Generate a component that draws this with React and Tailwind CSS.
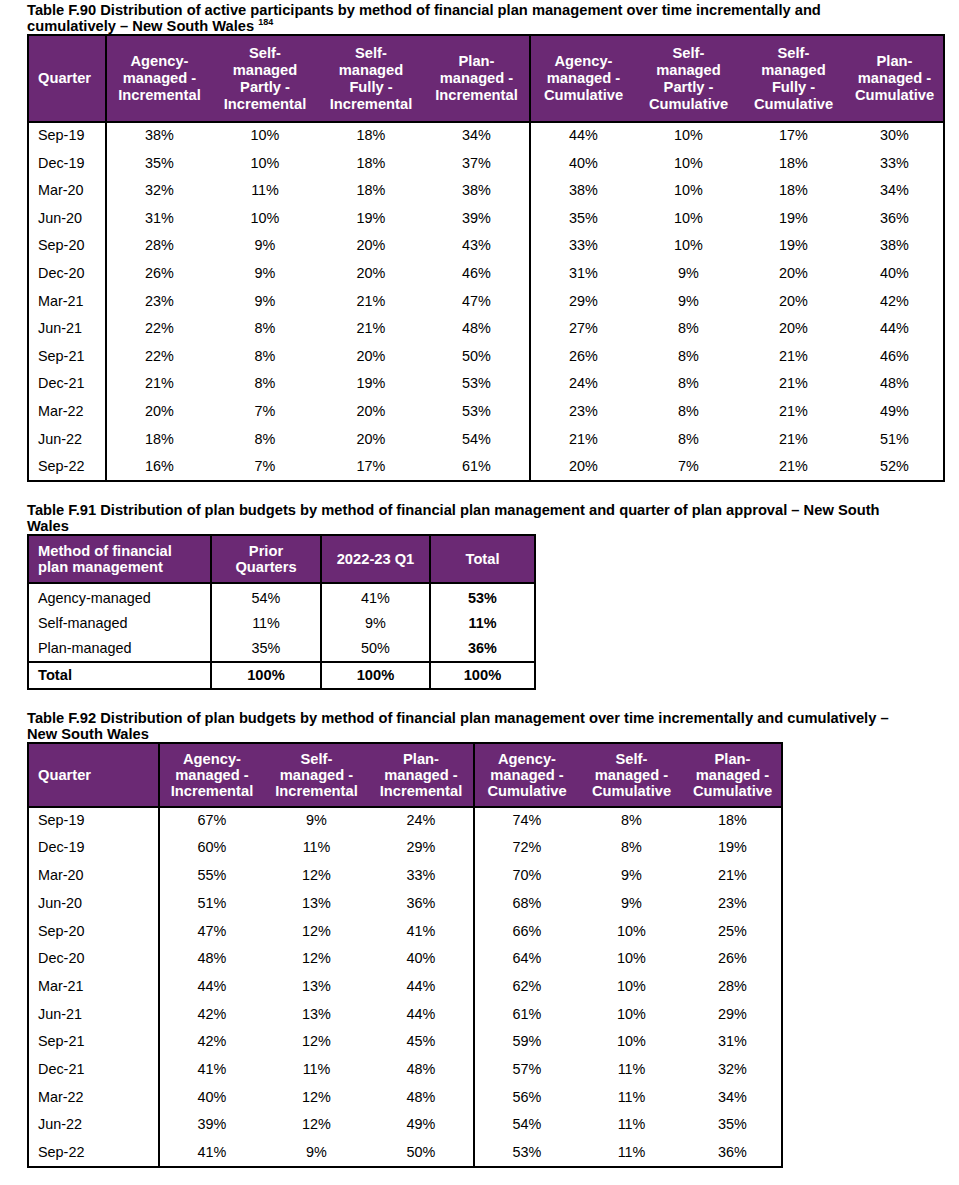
import React from 'react';

const f90Rows = [
  ['Sep-19', '38%', '10%', '18%', '34%', '44%', '10%', '17%', '30%'],
  ['Dec-19', '35%', '10%', '18%', '37%', '40%', '10%', '18%', '33%'],
  ['Mar-20', '32%', '11%', '18%', '38%', '38%', '10%', '18%', '34%'],
  ['Jun-20', '31%', '10%', '19%', '39%', '35%', '10%', '19%', '36%'],
  ['Sep-20', '28%', '9%', '20%', '43%', '33%', '10%', '19%', '38%'],
  ['Dec-20', '26%', '9%', '20%', '46%', '31%', '9%', '20%', '40%'],
  ['Mar-21', '23%', '9%', '21%', '47%', '29%', '9%', '20%', '42%'],
  ['Jun-21', '22%', '8%', '21%', '48%', '27%', '8%', '20%', '44%'],
  ['Sep-21', '22%', '8%', '20%', '50%', '26%', '8%', '21%', '46%'],
  ['Dec-21', '21%', '8%', '19%', '53%', '24%', '8%', '21%', '48%'],
  ['Mar-22', '20%', '7%', '20%', '53%', '23%', '8%', '21%', '49%'],
  ['Jun-22', '18%', '8%', '20%', '54%', '21%', '8%', '21%', '51%'],
  ['Sep-22', '16%', '7%', '17%', '61%', '20%', '7%', '21%', '52%'],
];

const f92Rows = [
  ['Sep-19', '67%', '9%', '24%', '74%', '8%', '18%'],
  ['Dec-19', '60%', '11%', '29%', '72%', '8%', '19%'],
  ['Mar-20', '55%', '12%', '33%', '70%', '9%', '21%'],
  ['Jun-20', '51%', '13%', '36%', '68%', '9%', '23%'],
  ['Sep-20', '47%', '12%', '41%', '66%', '10%', '25%'],
  ['Dec-20', '48%', '12%', '40%', '64%', '10%', '26%'],
  ['Mar-21', '44%', '13%', '44%', '62%', '10%', '28%'],
  ['Jun-21', '42%', '13%', '44%', '61%', '10%', '29%'],
  ['Sep-21', '42%', '12%', '45%', '59%', '10%', '31%'],
  ['Dec-21', '41%', '11%', '48%', '57%', '11%', '32%'],
  ['Mar-22', '40%', '12%', '48%', '56%', '11%', '34%'],
  ['Jun-22', '39%', '12%', '49%', '54%', '11%', '35%'],
  ['Sep-22', '41%', '9%', '50%', '53%', '11%', '36%'],
];

const f90Head = [
  ['Quarter'],
  ['Agency-', 'managed -', 'Incremental'],
  ['Self-', 'managed', 'Partly -', 'Incremental'],
  ['Self-', 'managed', 'Fully -', 'Incremental'],
  ['Plan-', 'managed -', 'Incremental'],
  ['Agency-', 'managed -', 'Cumulative'],
  ['Self-', 'managed', 'Partly -', 'Cumulative'],
  ['Self-', 'managed', 'Fully -', 'Cumulative'],
  ['Plan-', 'managed -', 'Cumulative'],
];

const f92Head = [
  ['Quarter'],
  ['Agency-', 'managed -', 'Incremental'],
  ['Self-', 'managed -', 'Incremental'],
  ['Plan-', 'managed -', 'Incremental'],
  ['Agency-', 'managed -', 'Cumulative'],
  ['Self-', 'managed -', 'Cumulative'],
  ['Plan-', 'managed -', 'Cumulative'],
];

const Title = ({ lines, note }) => (
  <div className="text-[14.7px] leading-[16px] font-bold text-black">
    {lines.map((l, i) => (
      <div key={i}>
        {l}
        {note && i === lines.length - 1 && <sup className="text-[9px] ml-[4px] top-[-6px]">{note}</sup>}
      </div>
    ))}
  </div>
);

const HeadCell = ({ lines, first, divider, leading }) => (
  <th
    className={`bg-[#6b2974] text-white font-bold text-[14.7px] ${leading} align-middle border-b-2 border-black ${
      first ? 'text-left pl-[9px]' : 'text-center'
    } ${divider ? 'border-r-2' : ''}`}
  >
    {lines.map((l, i) => (
      <div key={i}>{l}</div>
    ))}
  </th>
);

const QuarterTable = ({ widths, head, rows, dividers, headH, rowH, leading }) => (
  <table className="table-fixed border-collapse border-2 border-black" style={{ width: widths.reduce((a, b) => a + b, 0) }}>
    <colgroup>
      {widths.map((w, i) => (
        <col key={i} style={{ width: w }} />
      ))}
    </colgroup>
    <thead>
      <tr className={headH}>
        {head.map((h, i) => (
          <HeadCell key={i} lines={h} first={i === 0} divider={dividers.includes(i)} leading={leading} />
        ))}
      </tr>
    </thead>
    <tbody>
      {rows.map((r, ri) => (
        <tr key={ri} className={rowH}>
          {r.map((c, ci) => (
            <td
              key={ci}
              className={`text-[14.4px] p-0 align-middle border-black ${ci === 0 ? 'text-left pl-[9px]' : 'text-center'} ${
                dividers.includes(ci) ? 'border-r-2' : ''
              }`}
            >
              {c}
            </td>
          ))}
        </tr>
      ))}
    </tbody>
  </table>
);

const budgetRows = [
  ['Agency-managed', '54%', '41%', '53%'],
  ['Self-managed', '11%', '9%', '11%'],
  ['Plan-managed', '35%', '50%', '36%'],
];

const BudgetTable = () => {
  const widths = [183, 110, 109, 105];
  return (
    <table className="table-fixed border-collapse border-2 border-black" style={{ width: 507 }}>
      <colgroup>
        {widths.map((w, i) => (
          <col key={i} style={{ width: w }} />
        ))}
      </colgroup>
      <thead>
        <tr className="h-[48px]">
          <th className="bg-[#6b2974] text-white font-bold text-[14.7px] leading-[16px] text-left pl-[9px] border-b-2 border-r-2 border-black">
            <div>Method of financial</div>
            <div>plan management</div>
          </th>
          <th className="bg-[#6b2974] text-white font-bold text-[14.7px] leading-[16px] text-center border-b-2 border-r-2 border-black">
            <div>Prior</div>
            <div>Quarters</div>
          </th>
          <th className="bg-[#6b2974] text-white font-bold text-[14.7px] leading-[16px] text-center border-b-2 border-r-2 border-black">
            2022-23 Q1
          </th>
          <th className="bg-[#6b2974] text-white font-bold text-[14.7px] leading-[16px] text-center border-b-2 border-black">
            Total
          </th>
        </tr>
      </thead>
      <tbody>
        {budgetRows.map((r, ri) => (
          <tr key={ri} className={ri === 0 ? 'h-[28px]' : 'h-[25.5px]'}>
            <td className={`text-[14.4px] p-0 pl-[9px] border-r-2 border-black ${ri === 0 ? 'pt-[3px]' : ''}`}>{r[0]}</td>
            <td className={`text-[14.4px] p-0 text-center border-r-2 border-black ${ri === 0 ? 'pt-[3px]' : ''}`}>{r[1]}</td>
            <td className={`text-[14.4px] p-0 text-center border-r-2 border-black ${ri === 0 ? 'pt-[3px]' : ''}`}>{r[2]}</td>
            <td className={`text-[14.4px] p-0 text-center font-bold ${ri === 0 ? 'pt-[3px]' : ''}`}>{r[3]}</td>
          </tr>
        ))}
        <tr className="h-[27px] font-bold">
          <td className="text-[14.7px] p-0 pl-[9px] border-t-2 border-r-2 border-black">Total</td>
          <td className="text-[14.7px] p-0 text-center border-t-2 border-r-2 border-black">100%</td>
          <td className="text-[14.7px] p-0 text-center border-t-2 border-r-2 border-black">100%</td>
          <td className="text-[14.7px] p-0 text-center border-t-2 border-black">100%</td>
        </tr>
      </tbody>
    </table>
  );
};

export default function App() {
  return (
    <div className="w-[959px] min-h-[1185px] bg-white text-black font-['Liberation_Sans',Arial,sans-serif] pl-[27px] pt-[2px]">
      <Title
        lines={[
          'Table F.90 Distribution of active participants by method of financial plan management over time incrementally and',
          'cumulatively – New South Wales',
        ]}
        note="184"
      />
      <QuarterTable
        widths={[78, 106, 106, 106, 106, 106, 105, 105, 98]}
        head={f90Head}
        rows={f90Rows}
        dividers={[0, 4]}
        headH="h-[87px]"
        rowH="h-[27.6px]"
        leading="leading-[17px]"
      />

      <div className="mt-[20px]">
        <Title
          lines={[
            'Table F.91 Distribution of plan budgets by method of financial plan management and quarter of plan approval – New South',
            'Wales',
          ]}
        />
      </div>
      <BudgetTable />

      <div className="mt-[20px]">
        <Title
          lines={[
            'Table F.92 Distribution of plan budgets by method of financial plan management over time incrementally and cumulatively –',
            'New South Wales',
          ]}
        />
      </div>
      <QuarterTable
        widths={[131, 105, 105, 105, 105, 105, 98]}
        head={f92Head}
        rows={f92Rows}
        dividers={[0, 3]}
        headH="h-[64px]"
        rowH="h-[27.7px]"
        leading="leading-[16px]"
      />
    </div>
  );
}
